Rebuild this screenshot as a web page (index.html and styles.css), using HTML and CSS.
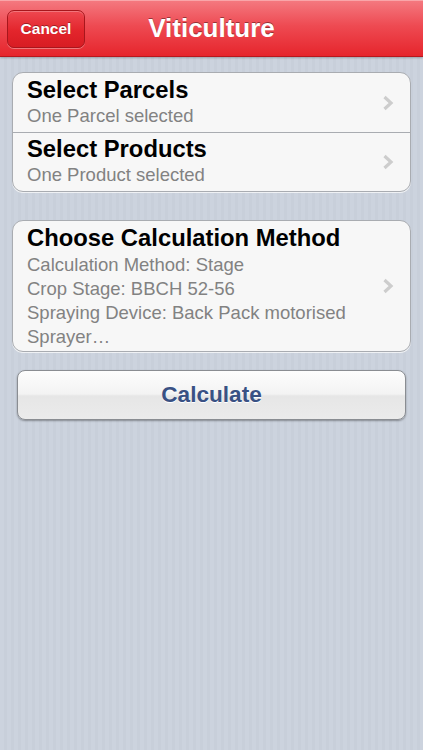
FILE: index.html
```html
<!DOCTYPE html>
<html>
<head>
<meta charset="utf-8">
<link rel="stylesheet" href="styles.css">
</head>
<body>
<div class="navbar">
  <div class="cancel">Cancel</div>
  <div class="title">Viticulture</div>
</div>
<div class="content">
  <div class="group">
    <div class="row">
      <div class="texts">
        <div class="rtitle">Select Parcels</div>
        <div class="rsub">One Parcel selected</div>
      </div>
      <svg class="chev" width="12" height="16" viewBox="0 0 12 16"><path d="M2.5 2 L9 8 L2.5 14" fill="none" stroke="#cdcdcd" stroke-width="3.2"/></svg>
    </div>
    <div class="row">
      <div class="texts">
        <div class="rtitle">Select Products</div>
        <div class="rsub">One Product selected</div>
      </div>
      <svg class="chev" width="12" height="16" viewBox="0 0 12 16"><path d="M2.5 2 L9 8 L2.5 14" fill="none" stroke="#cdcdcd" stroke-width="3.2"/></svg>
    </div>
  </div>
  <div class="group group2">
    <div class="row tall">
      <div class="texts">
        <div class="rtitle">Choose Calculation Method</div>
        <div class="rsub">Calculation Method: Stage</div>
        <div class="rsub">Crop Stage: BBCH 52-56</div>
        <div class="rsub">Spraying Device: Back Pack motorised Sprayer…</div>
      </div>
      <svg class="chev" width="12" height="16" viewBox="0 0 12 16"><path d="M2.5 2 L9 8 L2.5 14" fill="none" stroke="#cdcdcd" stroke-width="3.2"/></svg>
    </div>
  </div>
  <div class="calc">Calculate</div>
</div>
</body>
</html>
```
FILE: styles.css
```css
html, body {
  margin: 0;
  padding: 0;
}
body {
  width: 423px;
  height: 750px;
  overflow: hidden;
  font-family: "Liberation Sans", Arial, sans-serif;
  background-color: #cbd2dd;
  background-image: repeating-linear-gradient(90deg, #ccd3de 0px, #ccd3de 4px, #c8cfda 4px, #c8cfda 7px);
}
.navbar {
  height: 57px;
  box-sizing: border-box;
  position: relative;
  display: flex;
  align-items: center;
  justify-content: center;
  background: linear-gradient(#f4787f 0%, #ee4a52 45%, #e6252c 100%);
  border-top: 1px solid #f9a5a9;
  border-bottom: 1px solid #b8161c;
  box-shadow: 0 1px 2px rgba(0,0,0,0.25);
}
.cancel {
  position: absolute;
  left: 7px;
  top: 9px;
  width: 78px;
  height: 38px;
  box-sizing: border-box;
  border-radius: 7px;
  border: 1px solid #a8161c;
  background: linear-gradient(#ee4850 0%, #e3252c 55%, #d81c23 100%);
  box-shadow: inset 0 1px 0 rgba(255,255,255,0.25), 0 1px 0 rgba(255,255,255,0.35);
  color: #fff;
  font-weight: bold;
  font-size: 15.5px;
  display: flex;
  align-items: center;
  justify-content: center;
  text-shadow: 0 -1px 0 rgba(0,0,0,0.35);
}
.title {
  color: #fff;
  font-weight: bold;
  font-size: 26px;
  text-shadow: 0 -1px 0 rgba(0,0,0,0.4);
  margin-top: -1px;
}
.content {
  padding: 15px 12px 0 12px;
  display: flex;
  flex-direction: column;
}
.group {
  background: #f7f7f7;
  border: 1px solid #a9acb1;
  border-radius: 11px;
  box-shadow: 0 1px 0 rgba(255,255,255,0.7);
  overflow: hidden;
}
.group2 {
  margin-top: 28px;
}
.row {
  display: flex;
  align-items: center;
  height: 59px;
  box-sizing: border-box;
  padding: 0 16px 0 14px;
}
.row + .row {
  border-top: 1px solid #a9acb1;
}
.row.tall {
  height: 130px;
  padding-top: 0px;
}
.texts {
  flex: 1;
  min-width: 0;
}
.rtitle {
  font-weight: bold;
  font-size: 23.8px;
  color: #000;
  line-height: 28px;
}
.row:not(.tall) .rtitle {
  margin-top: -2px;
}
.rsub {
  font-size: 18.5px;
  color: #828282;
  line-height: 24px;
}
.tall .rtitle {
  margin-bottom: 1px;
}
.tall .rsub:last-child {
  padding-right: 20px;
}
.chev {
  flex: none;
  margin-left: 6px;
}
.calc {
  margin: 18px 5px 0 5px;
  height: 50px;
  box-sizing: border-box;
  border: 1px solid #8a8d92;
  border-radius: 8px;
  background: linear-gradient(#fdfdfd 0%, #f3f3f3 48%, #e6e6e6 52%, #ebebeb 100%);
  box-shadow: 0 1px 2px rgba(0,0,0,0.35);
  display: flex;
  align-items: center;
  justify-content: center;
  font-weight: bold;
  font-size: 22.6px;
  color: #395184;
  text-shadow: 0 1px 0 #fff;
}
```
